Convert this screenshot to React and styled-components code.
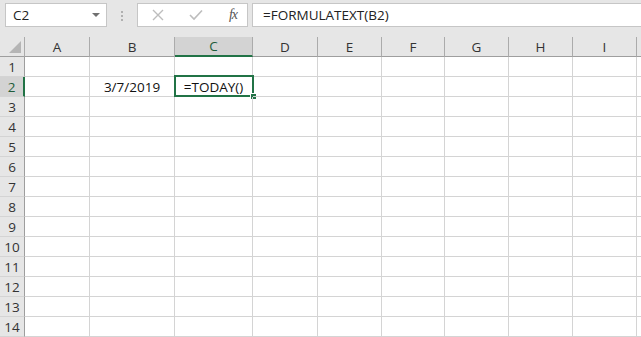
import React from 'react'
import styled, { createGlobalStyle, css } from 'styled-components'

const GlobalStyle = createGlobalStyle`
  html, body {
    margin: 0;
    padding: 0;
    background: #fff;
    font-family: "Open Sans", "Noto Sans", sans-serif;
    overflow: hidden;
  }
`

const COLS = [
  { name: 'A', w: 65 },
  { name: 'B', w: 85 },
  { name: 'C', w: 78 },
  { name: 'D', w: 65 },
  { name: 'E', w: 64 },
  { name: 'F', w: 63 },
  { name: 'G', w: 64 },
  { name: 'H', w: 64 },
  { name: 'I', w: 64 },
  { name: '', w: 30 },
]
const ROWS = 14
const GREEN = '#217346'

const Page = styled.div`
  width: 641px;
  height: 337px;
  overflow: hidden;
  background: #e6e6e6;
`

const Toolbar = styled.div`
  display: flex;
  align-items: flex-start;
  height: 37px;
  padding-top: 3px;
  box-sizing: border-box;
`

const boxed = css`
  height: 24px;
  background: #fff;
  border: 1px solid #c6c6c6;
  box-sizing: border-box;
  display: flex;
  align-items: center;
`

const NameBox = styled.div`
  ${boxed}
  width: 102px;
  margin-left: 5px;
  padding: 0 6px 0 7px;
  justify-content: space-between;
  font-size: 13.5px;
  color: #222;
`

const Caret = styled.span`
  width: 0;
  height: 0;
  border-left: 4px solid transparent;
  border-right: 4px solid transparent;
  border-top: 4px solid #707070;
`

const Grip = styled.div`
  display: flex;
  flex-direction: column;
  gap: 2px;
  margin: 8px 14px 0 14px;
  span {
    width: 2px;
    height: 2px;
    background: #b0b0b0;
  }
`

const IconBox = styled.div`
  ${boxed}
  width: 111px;
  padding: 0 10px 0 14px;
  justify-content: space-between;
`

const FormulaBox = styled.div`
  ${boxed}
  flex: 1;
  margin-left: 4px;
  padding-left: 10px;
  border-right: none;
  font-size: 13.5px;
  color: #222;
`

const Fx = styled.span`
  font-family: "Liberation Serif", "DejaVu Serif", serif;
  font-style: italic;
  font-size: 14px;
  color: #555;
  letter-spacing: -1px;
`

const Grid = styled.div`
  display: grid;
  grid-template-columns: 25px ${COLS.map((c) => `${c.w}px`).join(' ')};
  grid-auto-rows: 20px;
  background: #fff;
`

const HeadCell = styled.div`
  box-sizing: border-box;
  background: ${(p) => (p.$active ? '#d3d3d3' : '#e6e6e6')};
  color: ${(p) => (p.$active ? '#1f5c3a' : '#333')};
  font-size: 13.5px;
  display: flex;
  align-items: center;
  justify-content: center;
  border-right: 1px solid #ababab;
  border-bottom: 1px solid #9e9e9e;
  ${(p) => p.$active && css`border-bottom: 2px solid ${GREEN};`}
`

const Corner = styled.div`
  position: relative;
  background: #e6e6e6;
  border-right: 1px solid #ababab;
  border-bottom: 1px solid #9e9e9e;
  box-sizing: border-box;
  &::after {
    content: '';
    position: absolute;
    right: 3px;
    bottom: 3px;
    border-left: 12px solid transparent;
    border-bottom: 12px solid #b5b5b5;
  }
`

const RowHead = styled.div`
  box-sizing: border-box;
  background: ${(p) => (p.$active ? '#d3d3d3' : '#e6e6e6')};
  color: ${(p) => (p.$active ? '#1f5c3a' : '#333')};
  font-size: 13.5px;
  display: flex;
  align-items: center;
  justify-content: center;
  border-right: 1px solid #9e9e9e;
  border-bottom: 1px solid #d4d4d4;
  ${(p) => p.$active && css`border-right: 2px solid ${GREEN};`}
`

const Cell = styled.div`
  position: relative;
  box-sizing: border-box;
  border-right: 1px solid #d4d4d4;
  border-bottom: 1px solid #d4d4d4;
  font-size: 13.5px;
  color: #111;
  display: flex;
  align-items: center;
  justify-content: center;
  padding-top: 1px;
`

const Selection = styled.div`
  position: absolute;
  left: -1px;
  top: -2px;
  right: -2px;
  bottom: -1px;
  border: 2px solid ${GREEN};
  pointer-events: none;
  &::after {
    content: '';
    position: absolute;
    right: -4px;
    bottom: -4px;
    width: 5px;
    height: 5px;
    background: ${GREEN};
    border: 1px solid #fff;
    border-right: none;
    border-bottom: none;
  }
`

const data = { 'B2': '3/7/2019', 'C2': '=TODAY()' }

export default function App() {
  const rows = []
  for (let r = 1; r <= ROWS; r++) {
    rows.push(<RowHead key={`h${r}`} $active={r === 2}>{r}</RowHead>)
    COLS.forEach((c) => {
      const id = `${c.name}${r}`
      rows.push(
        <Cell key={id}>
          {data[id]}
          {id === 'C2' && <Selection />}
        </Cell>
      )
    })
  }
  return (
    <Page>
      <GlobalStyle />
      <Toolbar>
        <NameBox>
          C2
          <Caret />
        </NameBox>
        <Grip>
          <span />
          <span />
          <span />
        </Grip>
        <IconBox>
          <svg width="12" height="12" viewBox="0 0 12 12">
            <path d="M1 1 L11 11 M11 1 L1 11" stroke="#bdbdbd" strokeWidth="1.4" fill="none" />
          </svg>
          <svg width="14" height="12" viewBox="0 0 14 12">
            <path d="M1 6 L5 10 L13 1.5" stroke="#bdbdbd" strokeWidth="1.6" fill="none" />
          </svg>
          <Fx>fx</Fx>
        </IconBox>
        <FormulaBox>=FORMULATEXT(B2)</FormulaBox>
      </Toolbar>
      <Grid>
        <Corner />
        {COLS.map((c) => (
          <HeadCell key={c.name || 'x'} $active={c.name === 'C'}>{c.name}</HeadCell>
        ))}
        {rows}
      </Grid>
    </Page>
  )
}
